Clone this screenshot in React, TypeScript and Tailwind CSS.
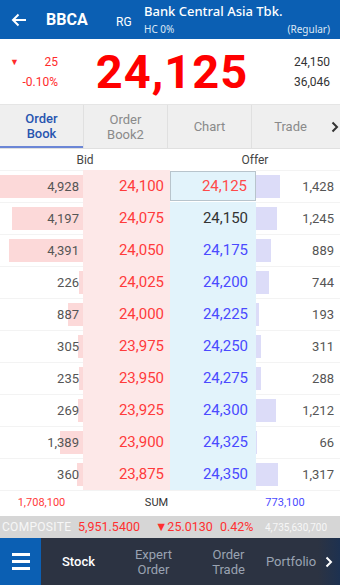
import React from "react";

const rows = [
  { bq: 4928, bp: "24,100", op: "24,125", oq: 1428 },
  { bq: 4197, bp: "24,075", op: "24,150", oq: 1245 },
  { bq: 4391, bp: "24,050", op: "24,175", oq: 889 },
  { bq: 226, bp: "24,025", op: "24,200", oq: 744 },
  { bq: 887, bp: "24,000", op: "24,225", oq: 193 },
  { bq: 305, bp: "23,975", op: "24,250", oq: 311 },
  { bq: 235, bp: "23,950", op: "24,275", oq: 288 },
  { bq: 269, bp: "23,925", op: "24,300", oq: 1212 },
  { bq: 1389, bp: "23,900", op: "24,325", oq: 66 },
  { bq: 360, bp: "23,875", op: "24,350", oq: 1317 },
];

const fmt = (n: number) => n.toLocaleString("en-US");
const MAX = 4928;

export default function App() {
  return (
    <div
      className="w-[340px] h-[585px] flex flex-col bg-white overflow-hidden"
      style={{ fontFamily: "Roboto, 'Noto Sans', sans-serif" }}
    >
      {/* Header */}
      <div className="h-[39px] bg-[#0b5fb3] flex items-center text-white shrink-0">
        <div className="w-[38px] flex justify-center">
          <svg width="16" height="14" viewBox="0 0 16 14" fill="none" stroke="white" strokeWidth="2">
            <path d="M15 7H2M7.5 1.5L2 7l5.5 5.5" />
          </svg>
        </div>
        <div className="w-[78px] pl-[8px] text-[16px] font-bold">BBCA</div>
        <div className="w-[28px] text-[12px] pt-[4px]">RG</div>
        <div className="flex-1 flex flex-col pr-[10px]" style={{ fontFamily: "'Noto Sans', sans-serif" }}>
          <div className="text-[13px] leading-[15px] font-medium">Bank Central Asia Tbk.</div>
          <div className="flex justify-between text-[10px] leading-[12px] mt-[4px] text-[#dce8f5]">
            <span>HC 0%</span>
            <span>(Regular)</span>
          </div>
        </div>
      </div>

      {/* Price */}
      <div className="h-[66px] flex items-center border-b border-[#e5e5e5] shrink-0">
        <div className="w-[66px] flex flex-col text-[#ff2b2b] text-[12px] leading-[20px] pl-[10px]">
          <div className="flex justify-between pr-[8px]">
            <span className="text-[9px]">▼</span>
            <span>25</span>
          </div>
          <div className="text-right pr-[8px]">-0.10%</div>
        </div>
        <div className="flex-1 text-center text-[#ff0000] text-[47px] font-bold leading-none tracking-[1px] pl-[4px]">
          24,125
        </div>
        <div className="w-[66px] flex flex-col text-right pr-[10px] text-[12px] leading-[20px] text-[#333]">
          <span>24,150</span>
          <span>36,046</span>
        </div>
      </div>

      {/* Tabs */}
      <div className="h-[44px] bg-[#efefef] flex items-stretch shrink-0 border-b border-[#e0e0e0]">
        {[
          ["Order", "Book"],
          ["Order", "Book2"],
          ["Chart"],
          ["Trade"],
        ].map((t, i) => (
          <div
            key={i}
            className={`flex flex-col items-center justify-center text-[13px] leading-[15px] ${
              i === 0 ? "w-[83px] text-[#2855b0] font-medium border-b-2 border-[#6b86d6]" : i === 3 ? "w-[78px] text-[#8a8a8a]" : "w-[84px] text-[#8a8a8a]"
            } ${i > 0 ? "border-l border-[#e0e0e0]" : ""}`}
          >
            {t.map((s) => (
              <span key={s}>{s}</span>
            ))}
          </div>
        ))}
        <div className="flex-1 flex items-center justify-center">
          <svg width="8" height="12" viewBox="0 0 8 12" fill="none" stroke="#333" strokeWidth="2">
            <path d="M1.5 1.5L6 6l-4.5 4.5" />
          </svg>
        </div>
      </div>

      {/* Bid / Offer header */}
      <div className="h-[21px] flex items-center text-[12px] text-[#444] shrink-0">
        <div className="w-[170px] text-center">Bid</div>
        <div className="w-[170px] text-center">Offer</div>
      </div>

      {/* Rows */}
      <div className="flex flex-col shrink-0">
        {rows.map((r, i) => {
          const bw = Math.round((r.bq / MAX) * 83);
          const ow = Math.round((r.oq / MAX) * 83);
          const opColor = i === 0 ? "text-[#ff4a4a]" : i === 1 ? "text-[#333]" : "text-[#4a4aff]";
          return (
            <div key={i} className="h-[32px] flex items-stretch text-[13px]">
              <div className="w-[83px] relative flex items-center justify-end border-t border-[#f3f3f3]">
                <div className="absolute right-0 top-[4px] bottom-[4px] bg-[#fcd9d9]" style={{ width: bw }} />
                <span className="relative text-[#555] pr-[4px]">{fmt(r.bq)}</span>
              </div>
              <div className="w-[87px] bg-[#fde8e8] flex items-center justify-end pr-[6px] text-[#ff3b3b] text-[15px]">
                {r.bp}
              </div>
              <div
                className={`w-[86px] bg-[#e2f3fb] flex items-center justify-end pr-[8px] text-[15px] ${opColor} ${
                  i === 0 ? "border border-[#b8c4cc] my-[1px]" : ""
                }`}
              >
                {r.op}
              </div>
              <div className="flex-1 relative flex items-center justify-end border-t border-[#f3f3f3]">
                <div className="absolute left-0 top-[4px] bottom-[4px] bg-[#dcdcf8]" style={{ width: ow }} />
                <span className="relative text-[#555] pr-[6px]">{fmt(r.oq)}</span>
              </div>
            </div>
          );
        })}
      </div>

      {/* SUM */}
      <div className="h-[26px] flex items-center text-[11px] shrink-0 border-t border-[#f3f3f3]">
        <div className="w-[83px] text-center text-[#ff3b3b]">1,708,100</div>
        <div className="flex-1 text-center text-[#333]">SUM</div>
        <div className="w-[110px] text-center text-[#4a4aff]">773,100</div>
      </div>

      {/* Composite */}
      <div className="h-[22px] bg-[#d6d6d6] flex items-center text-[12.5px] shrink-0 whitespace-nowrap">
        <span className="pl-[2px] w-[78px] text-[#f7f7f7] tracking-[0.3px] text-[12px]">COMPOSITE</span>
        <span className="text-[#ff3030] w-[77px]">5,951.5400</span>
        <span className="text-[#ff3030] w-[65px]">▼25.0130</span>
        <span className="text-[#ff3030] w-[45px]">0.42%</span>
        <span className="text-[#f7f7f7] text-[10px]">4,735,630,700</span>
      </div>

      {/* Bottom nav */}
      <div className="flex-1 bg-[#2c3342] flex items-stretch relative overflow-hidden">
        <div className="w-[41px] bg-[#0b5fb3] flex items-center justify-center">
          <div className="flex flex-col gap-[4px]">
            <div className="w-[18px] h-[3px] bg-white" />
            <div className="w-[18px] h-[3px] bg-white" />
            <div className="w-[18px] h-[3px] bg-white" />
          </div>
        </div>
        <div className="w-[75px] flex items-center justify-center text-white text-[13px] font-medium">Stock</div>
        <div className="w-[75px] flex flex-col items-center justify-center text-[#9aa3b2] text-[13px] leading-[15px]">
          <span>Expert</span>
          <span>Order</span>
        </div>
        <div className="w-[75px] flex flex-col items-center justify-center text-[#9aa3b2] text-[13px] leading-[15px]">
          <span>Order</span>
          <span>Trade</span>
        </div>
        <div className="flex items-center text-[#9aa3b2] text-[13px] whitespace-nowrap">Portfolio</div>
        <div className="absolute right-0 top-0 bottom-0 w-[22px] bg-gradient-to-r from-[#2c3342]/70 to-[#1d3150] flex items-center justify-center">
          <svg width="8" height="12" viewBox="0 0 8 12" fill="none" stroke="white" strokeWidth="2">
            <path d="M1.5 1.5L6 6l-4.5 4.5" />
          </svg>
        </div>
      </div>
    </div>
  );
}
